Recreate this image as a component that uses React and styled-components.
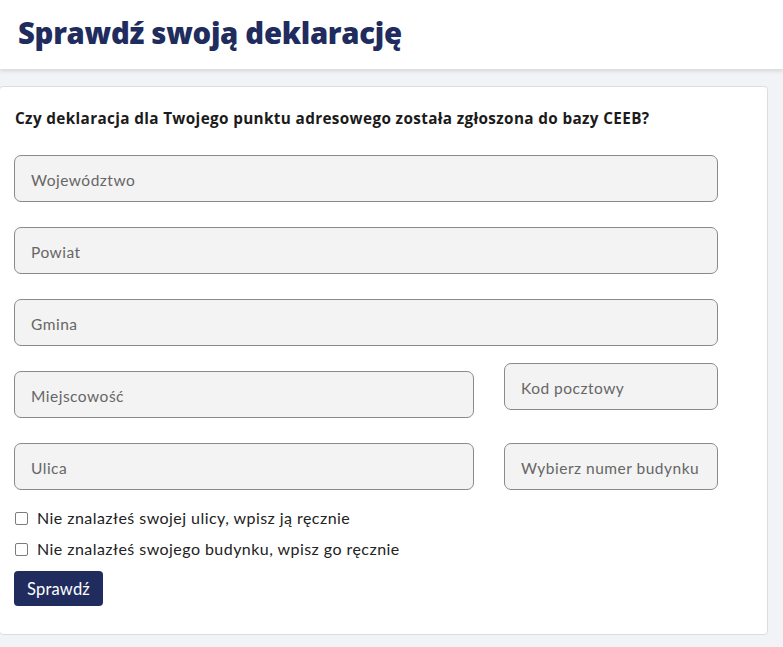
import React from "react";
import styled, { createGlobalStyle } from "styled-components";

const Global = createGlobalStyle`
  html, body { margin: 0; padding: 0; }
  body {
    background: #f2f3f7;
    font-family: "Lato", "Noto Sans", sans-serif;
    overflow: hidden;
  }
  * { box-sizing: border-box; }
`;

const Header = styled.header`
  height: 69px;
  background: #ffffff;
  box-shadow: 0 2px 4px rgba(0, 0, 0, 0.12);
  display: flex;
  align-items: center;
  padding: 0 0 4px 18px;
  position: relative;
`;

const Title = styled.h1`
  margin: 0;
  font-family: "Open Sans", "Lato", sans-serif;
  font-weight: 800;
  font-size: 29.3px;
  letter-spacing: -0.3px;
  color: #212c5e;
`;

const Main = styled.main`
  padding-top: 17px;
`;

const Card = styled.section`
  width: 769px;
  margin-left: -1px;
  background: #ffffff;
  border: 1px solid #dcdde2;
  border-radius: 4px;
  padding: 21px 0 28px 14px;
`;

const Question = styled.p`
  margin: 0 0 27px;
  padding-left: 1px;
  font-family: "Open Sans", "Lato", sans-serif;
  font-size: 15.3px;
  font-weight: 700;
  letter-spacing: 0.35px;
  line-height: 20px;
  color: #1b1b1b;
`;

const Fields = styled.div`
  display: grid;
  grid-template-columns: 460px 214px;
  column-gap: 30px;
  row-gap: 25px;
  width: 704px;
  align-items: start;
`;

const Field = styled.div`
  grid-column: ${(p) => (p.$full ? "1 / -1" : "auto")};
  margin-top: ${(p) => (p.$raised ? "-8px" : "0")};
  height: 47px;
  background: #f3f3f3;
  border: 1px solid #8a8a8a;
  border-radius: 7px;
  display: flex;
  align-items: center;
  padding: 3px 0 0 16px;
  font-family: "Lato", sans-serif;
  font-size: 15.5px;
  letter-spacing: 0.5px;
  color: #666;
  white-space: nowrap;
  overflow: hidden;
`;

const Checks = styled.div`
  display: flex;
  flex-direction: column;
  gap: 11px;
  margin-top: 18px;
`;

const CheckRow = styled.label`
  display: flex;
  align-items: center;
  gap: 9px;
  font-size: 16px;
  letter-spacing: 0.45px;
  line-height: 20px;
  color: #222;
`;

const Box = styled.span`
  width: 13px;
  height: 13px;
  border: 1.5px solid #7b7b80;
  border-radius: 2px;
  background: #fff;
  margin-left: 1px;
`;

const Button = styled.button`
  margin-top: 12px;
  width: 89px;
  height: 35px;
  background: #212c5e;
  color: #fff;
  border: none;
  border-radius: 4px;
  font-family: "Lato", sans-serif;
  font-size: 16.5px;
  letter-spacing: 0.2px;
  padding: 0;
`;

const fields = [
  { label: "Województwo", full: true },
  { label: "Powiat", full: true },
  { label: "Gmina", full: true },
  { label: "Miejscowość" },
  { label: "Kod pocztowy", raised: true },
  { label: "Ulica" },
  { label: "Wybierz numer budynku" },
];

export default function App() {
  return (
    <>
      <Global />
      <Header>
        <Title>Sprawdź swoją deklarację</Title>
      </Header>
      <Main>
        <Card>
          <Question>
            Czy deklaracja dla Twojego punktu adresowego została zgłoszona do bazy CEEB?
          </Question>
          <Fields>
            {fields.map((f) => (
              <Field key={f.label} $full={f.full} $raised={f.raised}>
                {f.label}
              </Field>
            ))}
          </Fields>
          <Checks>
            <CheckRow>
              <Box />
              Nie znalazłeś swojej ulicy, wpisz ją ręcznie
            </CheckRow>
            <CheckRow>
              <Box />
              Nie znalazłeś swojego budynku, wpisz go ręcznie
            </CheckRow>
          </Checks>
          <Button>Sprawdź</Button>
        </Card>
      </Main>
    </>
  );
}
